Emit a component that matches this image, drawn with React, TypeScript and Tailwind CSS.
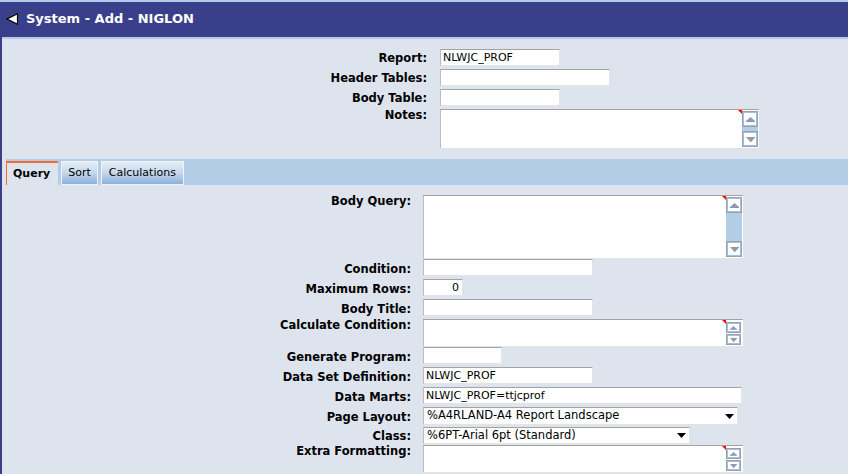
import React from "react";

const inputCls =
  "h-[17px] bg-white border border-[#e4e4e4] border-t-[#a3a3a3] border-l-[#bcbcbc] px-[2px] text-[11px] text-black outline-none leading-none";

function Label({ children, className }: { children: React.ReactNode; className: string }) {
  return (
    <div className={`shrink-0 text-right text-[11.5px] font-bold text-black leading-[13px] whitespace-nowrap ${className}`}>
      {children}
    </div>
  );
}

function ScrollBtn({ dir, small }: { dir: "up" | "down"; small?: boolean }) {
  return (
    <div
      className={
        small
          ? "w-[15px] h-[11px] flex items-center justify-center bg-white border border-[#a0a0a0] shadow-[inset_0_0_0_1px_#9dbfea]"
          : "w-[16px] h-[16px] flex items-center justify-center bg-white border border-[#a0a0a0] shadow-[inset_0_0_0_1px_#9dbfea]"
      }
    >
      {dir === "up" ? (
        <svg width={small ? 7 : 9} height={small ? 4 : 5} viewBox="0 0 9 5">
          <polygon points="0,4 4.5,0 9,4" fill="#9a9a9a" />
          <rect x="0" y="4" width="9" height="1" fill="#6d9de0" />
        </svg>
      ) : (
        <svg width={small ? 7 : 9} height={small ? 4 : 5} viewBox="0 0 9 5">
          <polygon points="0,0 9,0 4.5,5" fill="#9a9a9a" />
          <line x1="9" y1="0" x2="4.5" y2="5" stroke="#6d9de0" strokeWidth="1" />
        </svg>
      )}
    </div>
  );
}

function Corner() {
  return (
    <svg className="absolute top-0 right-0" width="4" height="4" viewBox="0 0 4 4">
      <polygon points="0,0 4,0 4,4" fill="#ff0000" />
    </svg>
  );
}

function Select({ value, className }: { value: string; className: string }) {
  return (
    <div
      className={`flex items-center justify-between bg-white border border-[#e4e4e4] border-t-[#a3a3a3] border-l-[#bcbcbc] pl-[3px] pr-[3px] text-[11.5px] text-black ${className}`}
    >
      <span>{value}</span>
      <svg width="9" height="5" viewBox="0 0 9 5">
        <polygon points="0,0 9,0 4.5,5" fill="#000" />
      </svg>
    </div>
  );
}

export default function App() {
  return (
    <div className="w-[848px] h-[474px] overflow-hidden bg-[#dde4ee] font-['DejaVu_Sans',Verdana,sans-serif]">
      <div className="h-[2px] bg-[#b4cde6]" />
      <div className="border-l-2 border-[#393f8a] h-[472px]">
        {/* title bar */}
        <div className="h-[35px] bg-[#393f8a] flex items-center pl-[4px] gap-[8px]">
          <svg width="12" height="12" viewBox="0 0 12 12" className="-mt-[1px]">
            <polygon points="11.5,0.8 11.5,11.2 1,6" fill="#fff" stroke="#000" strokeWidth="1.2" />
          </svg>
          <span className="text-white font-bold text-[13px] -mt-[2px]">System - Add - NIGLON</span>
        </div>
        <div className="h-[2px] bg-[#b4cde6]" />

        {/* header form */}
        <div className="pt-[10px] flex flex-col">
          <div className="flex gap-[13px]">
            <Label className="w-[425px] pt-[3px]">Report:</Label>
            <input readOnly value="NLWJC_PROF" className={`${inputCls} w-[120px]`} />
          </div>
          <div className="flex gap-[13px] mt-[3px]">
            <Label className="w-[425px] pt-[3px]">Header Tables:</Label>
            <input readOnly value="" className={`${inputCls} w-[170px]`} />
          </div>
          <div className="flex gap-[13px] mt-[3px]">
            <Label className="w-[425px] pt-[3px]">Body Table:</Label>
            <input readOnly value="" className={`${inputCls} w-[120px]`} />
          </div>
          <div className="flex gap-[13px] mt-[3px]">
            <Label className="w-[425px]">Notes:</Label>
            <div className="flex h-[39px] border-t border-[#a3a3a3] bg-white">
              <div className="relative w-[302px] border-l border-[#bcbcbc]">
                <Corner />
              </div>
              <div className="w-[17px] flex flex-col pt-[1px]">
                <ScrollBtn dir="up" />
                <div className="h-[4px] w-[16px] bg-[#b4cde6]" />
                <ScrollBtn dir="down" />
              </div>
            </div>
          </div>
        </div>

        {/* tabs */}
        <div className="ml-[4px] mt-[11px] h-[26px] bg-[#b4cde6] flex items-end gap-[3px]">
          <div className="h-[24px] flex items-center bg-[#dde4ee] border-t-2 border-l border-[#f36f2e] pl-[6px] pr-[8px] text-[11px] font-bold text-black">
            Query
          </div>
          <div className="h-[24px] flex items-center bg-linear-to-b from-[#e6eef7] via-[#c4d7ec] to-[#8cb1da] border border-[#eef3f9] px-[6px] text-[11px] text-black">
            Sort
          </div>
          <div className="h-[24px] flex items-center bg-linear-to-b from-[#e6eef7] via-[#c4d7ec] to-[#8cb1da] border border-[#eef3f9] px-[7px] text-[11px] text-black">
            Calculations
          </div>
        </div>

        {/* query form */}
        <div className="pt-[10px] flex flex-col">
          <div className="flex gap-[12px]">
            <Label className="w-[409px]">Body Query:</Label>
            <div className="flex h-[63px] border-t border-[#a3a3a3] bg-white">
              <div className="relative w-[303px] border-l border-[#bcbcbc]">
                <Corner />
              </div>
              <div className="w-[17px] flex flex-col pt-[1px]">
                <ScrollBtn dir="up" />
                <div className="h-[28px] w-[16px] bg-[#b4cde6]" />
                <ScrollBtn dir="down" />
              </div>
            </div>
          </div>
          <div className="flex gap-[12px] mt-[1px]">
            <Label className="w-[409px] pt-[4px]">Condition:</Label>
            <input readOnly value="" className={`${inputCls} w-[170px]`} />
          </div>
          <div className="flex gap-[12px] mt-[3px]">
            <Label className="w-[409px] pt-[4px]">Maximum Rows:</Label>
            <input readOnly value="0" className={`${inputCls} w-[40px] text-right pr-[3px]`} />
          </div>
          <div className="flex gap-[12px] mt-[3px]">
            <Label className="w-[409px] pt-[4px]">Body Title:</Label>
            <input readOnly value="" className={`${inputCls} w-[170px]`} />
          </div>
          <div className="flex gap-[12px] mt-[3px]">
            <Label className="w-[409px]">Calculate Condition:</Label>
            <div className="flex h-[27px] border-t border-[#a3a3a3] bg-white">
              <div className="relative w-[303px] border-l border-[#bcbcbc]">
                <Corner />
              </div>
              <div className="w-[17px] flex flex-col pt-[2px] gap-[1px]">
                <ScrollBtn dir="up" small />
                <ScrollBtn dir="down" small />
              </div>
            </div>
          </div>
          <div className="flex gap-[12px] mt-[1px]">
            <Label className="w-[409px] pt-[4px]">Generate Program:</Label>
            <input readOnly value="" className={`${inputCls} w-[79px]`} />
          </div>
          <div className="flex gap-[12px] mt-[3px]">
            <Label className="w-[409px] pt-[4px]">Data Set Definition:</Label>
            <input readOnly value="NLWJC_PROF" className={`${inputCls} w-[170px]`} />
          </div>
          <div className="flex gap-[12px] mt-[3px]">
            <Label className="w-[409px] pt-[4px]">Data Marts:</Label>
            <input readOnly value="NLWJC_PROF=ttjcprof" className={`${inputCls} w-[319px]`} />
          </div>
          <div className="flex gap-[12px] mt-[3px]">
            <Label className="w-[409px] pt-[4px]">Page Layout:</Label>
            <Select value="%A4RLAND-A4 Report Landscape" className="w-[315px] h-[18px]" />
          </div>
          <div className="flex gap-[12px] mt-[2px]">
            <Label className="w-[409px] pt-[3px]">Class:</Label>
            <Select value="%6PT-Arial 6pt (Standard)" className="w-[267px] h-[17px]" />
          </div>
          <div className="flex gap-[12px] mt-[1px]">
            <Label className="w-[409px]">Extra Formatting:</Label>
            <div className="flex h-[27px] border-t border-[#a3a3a3] bg-white">
              <div className="relative w-[303px] border-l border-[#bcbcbc]">
                <Corner />
              </div>
              <div className="w-[17px] flex flex-col pt-[2px] gap-[1px]">
                <ScrollBtn dir="up" small />
                <ScrollBtn dir="down" small />
              </div>
            </div>
          </div>
          <div className="flex gap-[12px] mt-[2px]">
            <div className="w-[409px] shrink-0" />
            <input readOnly value="" className={`${inputCls} w-[92px]`} />
          </div>
        </div>
      </div>
    </div>
  );
}
